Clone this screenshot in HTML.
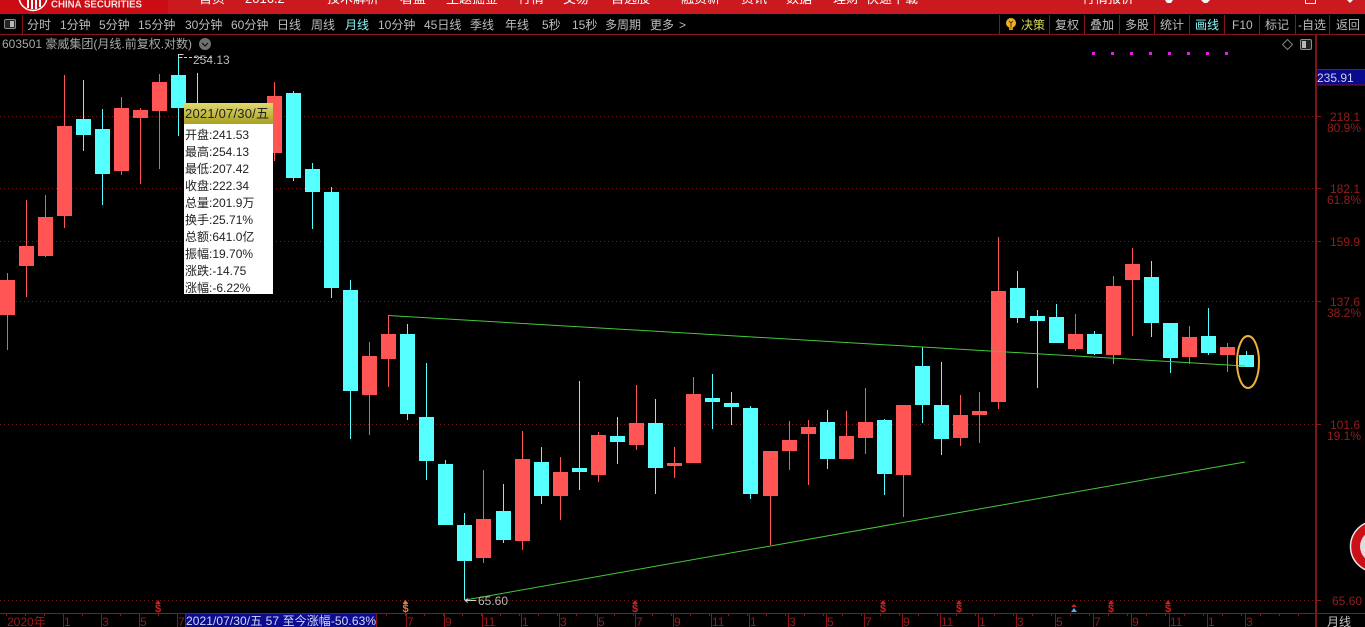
<!DOCTYPE html>
<html><head><meta charset="utf-8"><style>
html,body{margin:0;padding:0;background:#000;width:1365px;height:627px;overflow:hidden}
svg{display:block;font-family:"Liberation Sans","Noto Sans CJK SC",sans-serif;font-size:12px}
</style></head><body>
<svg width="1365" height="627" viewBox="0 0 1365 627" xmlns="http://www.w3.org/2000/svg">
<rect width="1365" height="627" fill="#000"/>
<!-- top bar -->
<rect width="1365" height="14" fill="#ca1a20"/>
<rect width="168" height="14" fill="#cc0c14"/>
<circle cx="33" cy="-3.5" r="14" fill="#cc0c14" stroke="#fff" stroke-width="1.5"/>
<path d="M27 0h2v8h-2zM31 0h2v9h-2zM35 0h2v9h-2zM39 0h2v7h-2z" fill="#fff"/>
<text x="51" y="7.5" fill="#f4e4e4" font-weight="bold" font-size="10" textLength="91" lengthAdjust="spacingAndGlyphs">CHINA SECURITIES</text>
<g fill="#fff" font-size="13">
<text x="199" y="3">首页</text><text x="245" y="3">2016.2</text><text x="327" y="3">技术解析</text><text x="400" y="3">看盘</text><text x="446" y="3">主题掘金</text><text x="518" y="3">行情</text><text x="563" y="3">交易</text><text x="611" y="3">自选股</text><text x="681" y="3">融资新</text><text x="741" y="3">资讯</text><text x="786" y="3">数据</text><text x="833" y="3">理财</text><text x="866" y="3">快速下载</text><text x="1082" y="3">行情报价</text>
</g>
<path d="M1165 0h8l-2 3h-4zM1201 0h9l-3 3h-3zM1305 0h1v3h9v-3h1v4h-11zM1347 0l3 3 3-3" fill="#f4f4f4"/>
<!-- toolbar -->
<rect x="0" y="34" width="1365" height="1" fill="#8a1418"/>
<path d="M22 15h1v19h-1zM999 15h1v19h-1zM1049 15h1v19h-1zM1084 15h1v19h-1zM1119 15h1v19h-1zM1154 15h1v19h-1zM1189 15h1v19h-1zM1224 15h1v19h-1zM1259 15h1v19h-1zM1295 15h1v19h-1zM1329 15h1v19h-1z" fill="#8a1418"/>
<rect x="4.5" y="19.5" width="11" height="9" rx="1.5" fill="#222" stroke="#8c8c8c"/><rect x="10" y="21" width="4" height="6" fill="#b8b8b8"/>
<g fill="#bcbcbc">
<text x="27" y="29">分时</text><text x="60" y="29">1分钟</text><text x="99" y="29">5分钟</text><text x="138" y="29">15分钟</text><text x="185" y="29">30分钟</text><text x="231" y="29">60分钟</text><text x="277" y="29">日线</text><text x="311" y="29">周线</text>
<text x="345" y="29" fill="#8cf4f4">月线</text>
<text x="378" y="29">10分钟</text><text x="424" y="29">45日线</text><text x="470" y="29">季线</text><text x="505" y="29">年线</text><text x="542" y="29">5秒</text><text x="572" y="29">15秒</text><text x="605" y="29">多周期</text><text x="650" y="29">更多</text><text x="679" y="29">&gt;</text>
<text x="1021" y="29" fill="#d8d860">决策</text><text x="1055" y="29">复权</text><text x="1090" y="29">叠加</text><text x="1125" y="29">多股</text><text x="1160" y="29">统计</text>
<text x="1195" y="29" fill="#8cf4f4">画线</text><text x="1232" y="29">F10</text><text x="1265" y="29">标记</text><text x="1298" y="29">-自选</text><text x="1336" y="29">返回</text>
</g>
<circle cx="1011" cy="23" r="5" fill="#f0b020"/><path d="M1009 27h4v3h-4z" fill="#c89020"/><path d="M1009 21l2 2 2-2M1011 23v4" stroke="#5a3a00" fill="none"/>
<!-- title -->
<text x="2" y="48" fill="#a8a8a8">603501 豪威集团(月线.前复权.对数)</text>
<circle cx="205" cy="44" r="6" fill="#707070"/><path d="M202 43l3 3 3-3" stroke="#111" stroke-width="1.2" fill="none"/>
<path d="M1287.5 39.5l5 5-5 5-5-5z" fill="none" stroke="#808080"/>
<rect x="1300.5" y="39.5" width="11" height="10" rx="1.5" fill="#222" stroke="#8c8c8c"/><rect x="1302" y="41" width="4" height="7" fill="#b8b8b8"/>
<path d="M1092 52h3v3h-3zM1111 52h3v3h-3zM1130 52h3v3h-3zM1149 52h3v3h-3zM1168 52h3v3h-3zM1187 52h3v3h-3zM1206 52h3v3h-3zM1225 52h3v3h-3z" fill="#e020e0"/>
<!-- grid -->
<g stroke="#7a1c1c" stroke-dasharray="1 3" shape-rendering="crispEdges">
<path d="M0 116.5H1315M0 188.5H1315M0 241.5H1315M0 301.5H1315M0 424.5H1315M0 600.5H1315"/>
</g>
<!-- candles -->
<path shape-rendering="crispEdges" fill="#ff5555" d="
M7 273h1V350h-1zM0 280h15V315h-15z
M26 200h1V297h-1zM19 246h15V266h-15z
M45 195h1V257h-1zM38 217h15V256h-15z
M64 75h1V228h-1zM57 126h15V216h-15z
M121 97h1V175h-1zM114 108h15V171h-15z
M140 108h1V184h-1zM133 110h15V118h-15z
M159 74h1V169h-1zM152 82h15V111h-15z
M274 82h1V161h-1zM267 96h15V153h-15z
M369 342h1V435h-1zM362 356h15V395h-15z
M388 316h1V387h-1zM381 334h15V359h-15z
M483 470h1V563h-1zM476 519h15V558h-15z
M522 431h1V550h-1zM515 459h15V541h-15z
M560 457h1V520h-1zM553 472h15V496h-15z
M598 432h1V482h-1zM591 435h15V475h-15z
M636 385h1V450h-1zM629 423h15V445h-15z
M674 447h1V478h-1zM667 463h15V466h-15z
M686 394h15V463h-15zM693 377h1V394h-1z
M770 496h1V545h-1zM763 451h15V496h-15z
M789 421h1V470h-1zM782 440h15V451h-15z
M808 420h1V485h-1zM801 427h15V434h-15z
M846 411h1V436h-1zM839 436h15V459h-15z
M865 388h1V454h-1zM858 422h15V438h-15z
M903 475h1V517h-1zM896 405h15V475h-15z
M960 395h1V446h-1zM953 415h15V438h-15z
M979 392h1V443h-1zM972 411h15V415h-15z
M998 237h1V409h-1zM991 291h15V402h-15z
M1075 314h1V351h-1zM1068 334h15V349h-15z
M1113 276h1V364h-1zM1106 286h15V355h-15z
M1132 248h1V336h-1zM1125 264h15V280h-15z
M1189 326h1V364h-1zM1182 337h15V357h-15z
M1227 343h1V372h-1zM1220 347h15V355h-15z"/>
<path shape-rendering="crispEdges" fill="#55ffff" d="
M83 80h1V151h-1zM76 119h15V135h-15z
M102 109h1V205h-1zM95 129h15V174h-15z
M178 55h1V136h-1zM171 75h15V108h-15z
M197 73h1V110h-1z
M293 91h1V181h-1zM286 93h15V178h-15z
M312 163h1V229h-1zM305 169h15V192h-15z
M331 187h1V298h-1zM324 192h15V288h-15z
M350 280h1V439h-1zM343 290h15V391h-15z
M407 324h1V420h-1zM400 334h15V414h-15z
M426 363h1V480h-1zM419 417h15V461h-15z
M445 460h1V464h-1zM438 464h15V525h-15z
M464 513h1V600h-1zM457 525h15V561h-15z
M503 484h1V543h-1zM496 511h15V540h-15z
M541 447h1V504h-1zM534 462h15V496h-15z
M579 381h1V490h-1zM572 468h15V472h-15z
M617 417h1V464h-1zM610 436h15V442h-15z
M655 399h1V494h-1zM648 423h15V468h-15z
M712 374h1V429h-1zM705 398h15V402h-15z
M731 392h1V425h-1zM724 403h15V407h-15z
M750 406h1V499h-1zM743 408h15V494h-15z
M827 410h1V469h-1zM820 422h15V459h-15z
M884 419h1V495h-1zM877 420h15V474h-15z
M922 347h1V423h-1zM915 366h15V405h-15z
M941 362h1V455h-1zM934 405h15V439h-15z
M1017 271h1V323h-1zM1010 288h15V318h-15z
M1037 310h1V388h-1zM1030 316h15V321h-15z
M1056 304h1V317h-1zM1049 317h15V343h-15z
M1094 331h1V355h-1zM1087 334h15V354h-15z
M1151 261h1V337h-1zM1144 277h15V323h-15z
M1170 323h1V373h-1zM1163 323h15V358h-15z
M1208 308h1V355h-1zM1201 336h15V353h-15z
M1246 351h1V355h-1zM1239 355h15V367h-15z"/>
<!-- trend lines -->
<path d="M388 315.5L1245 366M465 600L1245 462" stroke="#46c83c" stroke-width="1" fill="none"/>
<ellipse cx="1248" cy="362" rx="11" ry="26" fill="none" stroke="#eeb238" stroke-width="2"/>
<!-- annotations -->
<path d="M178.5 54v3M178.5 54.5h5M178.5 57.5h4" stroke="#cfcfcf" fill="none"/>
<path d="M184 57.5H213" stroke="#cfcfcf" stroke-dasharray="3 2" fill="none"/>
<text x="193" y="64" fill="#b8b8b8">254.13</text>
<path d="M465 600.5h11M465 600.5l3-2M465 600.5l3 2" stroke="#cfcfcf" fill="none"/>
<text x="478" y="605" fill="#b8b8b8">65.60</text>
<!-- tooltip -->
<defs><linearGradient id="g" x1="0" y1="0" x2="0" y2="1"><stop offset="0" stop-color="#e0d870"/><stop offset="1" stop-color="#a8a020"/></linearGradient></defs>
<rect x="184" y="103" width="89" height="191" fill="#fff"/>
<rect x="184" y="103" width="89" height="21" fill="url(#g)"/>
<g fill="#222">
<text x="185" y="118" font-size="13" textLength="84">2021/07/30/五</text>
<text x="185" y="139">开盘:241.53</text><text x="185" y="156">最高:254.13</text><text x="185" y="173">最低:207.42</text><text x="185" y="190">收盘:222.34</text><text x="185" y="207">总量:201.9万</text><text x="185" y="224">换手:25.71%</text><text x="185" y="241">总额:641.0亿</text><text x="185" y="258">振幅:19.70%</text><text x="185" y="275">涨跌:-14.75</text><text x="185" y="292">涨幅:-6.22%</text>
</g>
<!-- right axis -->
<rect x="1315" y="35" width="2" height="592" fill="#7d1418"/>
<path d="M1315 116h6v1h-6zM1315 188h6v1h-6zM1315 241h6v1h-6zM1315 301h6v1h-6zM1315 424h6v1h-6zM1315 600h6v1h-6z" fill="#8a1418"/>
<rect x="1316.5" y="69.5" width="50" height="15.5" fill="#0a0a8c" stroke="#8a1418"/>
<text x="1317" y="82" fill="#d0d0e8">235.91</text>
<g fill="#981c1c" text-anchor="end">
<text x="1360" y="121">218.1</text><text x="1361" y="132">80.9%</text><text x="1360" y="193">182.1</text><text x="1361" y="204">61.8%</text><text x="1360" y="246">159.9</text><text x="1360" y="306">137.6</text><text x="1361" y="317">38.2%</text><text x="1360" y="429">101.6</text><text x="1361" y="440">19.1%</text><text x="1362" y="605">65.60</text>
</g>
<!-- bottom axis -->
<rect x="0" y="613" width="1365" height="1" fill="#8a1418"/>
<g transform="translate(-1 0)">
<path fill="#8a1418" d="M64 614h1v13h-1zM102 614h1v13h-1zM140 614h1v13h-1zM178 614h1v13h-1zM407 614h1v13h-1zM445 614h1v13h-1zM483 614h1v13h-1zM522 614h1v13h-1zM560 614h1v13h-1zM598 614h1v13h-1zM636 614h1v13h-1zM674 614h1v13h-1zM712 614h1v13h-1zM750 614h1v13h-1zM789 614h1v13h-1zM827 614h1v13h-1zM865 614h1v13h-1zM903 614h1v13h-1zM941 614h1v13h-1zM979 614h1v13h-1zM1017 614h1v13h-1zM1056 614h1v13h-1zM1094 614h1v13h-1zM1132 614h1v13h-1zM1170 614h1v13h-1zM1208 614h1v13h-1zM1246 614h1v13h-1z"/>
<path stroke="#8a1418" stroke-dasharray="1 18" stroke-width="2" d="M7 615H1315" fill="none"/>
<g fill="#981c1c">
<text x="8" y="626">2020年</text><text x="65" y="626">1</text><text x="103" y="626">3</text><text x="141" y="626">5</text><text x="179" y="626">7</text>
<text x="408" y="626">7</text><text x="446" y="626">9</text><text x="484" y="626">11</text><text x="523" y="626">1</text><text x="561" y="626">3</text><text x="599" y="626">5</text><text x="637" y="626">7</text><text x="675" y="626">9</text><text x="713" y="626">11</text><text x="751" y="626">1</text><text x="790" y="626">3</text><text x="828" y="626">5</text><text x="866" y="626">7</text><text x="904" y="626">9</text><text x="942" y="626">11</text><text x="980" y="626">1</text><text x="1018" y="626">3</text><text x="1057" y="626">5</text><text x="1095" y="626">7</text><text x="1133" y="626">9</text><text x="1171" y="626">11</text><text x="1209" y="626">1</text><text x="1247" y="626">3</text>
</g>
</g>
<rect x="185" y="614" width="192" height="13" fill="#0c0c90"/>
<path d="M185 614h1v13h-1zM376 614h1v13h-1z" fill="#8a1418"/>
<text x="186" y="625" fill="#d8d8ee" textLength="190">2021/07/30/五 57 至今涨幅-50.63%</text>
<text x="1327" y="626" fill="#c4c4c4">月线</text>
<!-- S markers -->
<g font-size="11" font-weight="bold" text-anchor="middle" fill="#cc2020">
<path d="M158 600l3 4h-6zM635 600l3 4h-6zM883 600l3 4h-6zM959 600l3 4h-6zM1111 600l3 4h-6zM1168 600l3 4h-6zM1074 604l3 3h-6z"/>
<text x="158" y="612">$</text><text x="635" y="612">$</text><text x="883" y="612">$</text><text x="959" y="612">$</text><text x="1111" y="612">$</text><text x="1168" y="612">$</text>
<path d="M405.5 600l3 4h-6z" fill="#e08040"/><text x="405.5" y="612" fill="#e08040">$</text>
<path d="M1074 608l3 4h-6z" fill="#50b0f0"/>
</g>
<!-- round badge -->
<circle cx="1376" cy="546.5" r="25.5" fill="#cc1018" stroke="#e8e8e8" stroke-width="1.5"/>
<circle cx="1376" cy="546.5" r="16" fill="#e0dcdc"/>
</svg>
</body></html>
